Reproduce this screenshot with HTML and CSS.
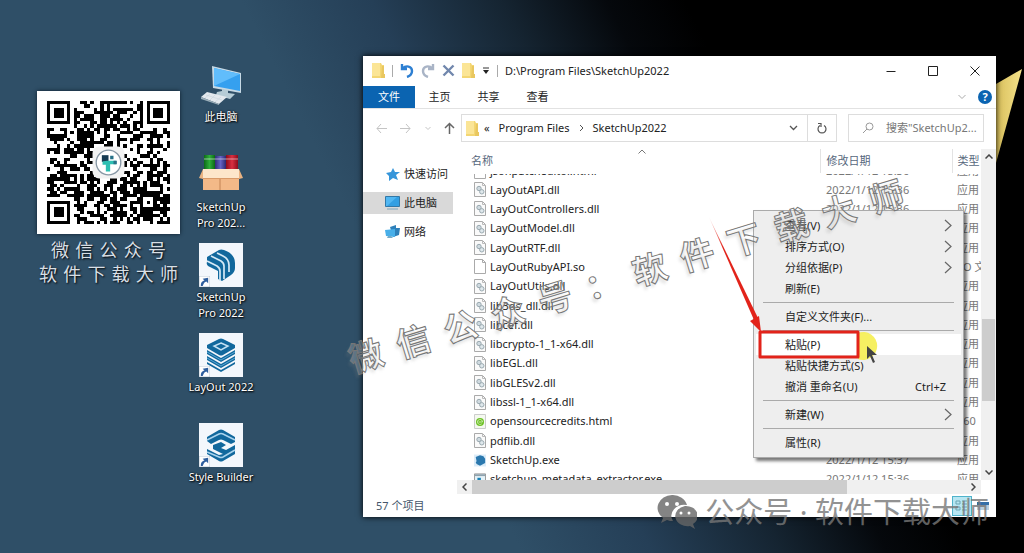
FILE: index.html
```html
<!DOCTYPE html>
<html lang="zh-CN">
<head>
<meta charset="utf-8">
<title>SketchUp2022</title>
<link rel="stylesheet" href="styles.css">
</head>
<body>
<svg class="defs" aria-hidden="true">
  <symbol id="folder" viewBox="0 0 13 15"><path d="M0 0h9l1 2h2v13H0z" fill="#f3d673"/><path d="M0 0h8v13H0z" fill="#fbe596"/><path d="M10 3h2v8h1v4h-4z" fill="#e9c75f"/></symbol>
  <symbol id="dll" viewBox="0 0 12 15"><path d="M.5.5h8l3 3v11H.5z" fill="#fafafa" stroke="#aaa"/><path d="M8.500.5v3h3" fill="none" stroke="#bbb"/><circle cx="5" cy="6.500" r="2.200" fill="#cfdae0" stroke="#9aa9b0"/><circle cx="7.800" cy="9.800" r="2.200" fill="#dfe8ec" stroke="#9aa9b0"/></symbol>
  <symbol id="file" viewBox="0 0 12 15"><path d="M.5.5h8l3 3v11H.5z" fill="#fff" stroke="#aaa"/><path d="M8.500.5v3h3" fill="none" stroke="#aaa"/></symbol>
  <symbol id="html" viewBox="0 0 12 15"><path d="M.5.5h11v14H.5z" fill="#f4f9ef" stroke="#ccc"/><circle cx="6" cy="8" r="4" fill="#6cc024"/><path d="M4.500 8h4a2.500 2.500 0 1 0-.8 1.800" fill="none" stroke="#d9f0c4" stroke-width=".8"/></symbol>
  <symbol id="exe" viewBox="0 0 14 14"><path d="M0 0h14v14H0z" fill="#dcecf8"/><path d="M7 1l4 1 2 3v5l-6 3-4-2-1-2 1-1-1-5z" fill="#2b78ae"/></symbol>
  <symbol id="tool" viewBox="0 0 14 14"><path d="M.5.5h13v13H.5z" fill="#e5f2f8" stroke="#888"/><path d="M1 1h12v2H1z" fill="#8fa2ae"/><path d="M4 5h4v4H4z" fill="#1781b6"/></symbol>
  <symbol id="more" viewBox="0 0 8 13"><path d="M1 1l6 5.500L1 12" fill="none" stroke="#666" stroke-width="1.200"/></symbol>
  <symbol id="shortcut" viewBox="0 0 12 12"><path d="M0 0h12v12H0z" fill="#fff" stroke="#b9c6d4"/><path d="M2 11c0-4 1-5 4-6L4 3l6-1v6L8 6c-3 1-3 3-4 5z" fill="#2f5f9e"/></symbol>
</svg>

<main class="desktop">
  <svg class="wedge" viewBox="0 0 28 94" aria-hidden="true"><defs><linearGradient id="gold" x2="1"><stop stop-color="#d9c05c"/><stop offset="1" stop-color="#f4e18a"/></linearGradient></defs><path d="M0 15L26 0L0 94z" fill="url(#gold)"/></svg>

  <section class="promo">
    <svg class="qr" id="qr" viewBox="0 0 43 43" role="img" aria-label="QR"></svg>
    <p class="spread short"><span>微</span><span>信</span><span>公</span><span>众</span><span>号</span></p>
    <p class="spread"><span>软</span><span>件</span><span>下</span><span>载</span><span>大</span><span>师</span></p>
  </section>

  <nav class="icons">
    <button class="shortcut"><svg viewBox="0 0 44 44"><path d="M13 3l29 7v20l-28-5z" fill="#c6d9e5"/><path d="M15 5l26 6v17l-26-5z" fill="#35a0ef"/><path d="M15 5l26 6-26 12z" fill="#61bdfb"/><path d="M23 26l6 1v3l7 1-5 5-14-4 1-3 5-1z" fill="#b6ccd6"/><path d="M8 29l20 5-8 7L2 34z" fill="#e3e9ee"/><path d="M2 34l18 7v1L2 36z" fill="#9cafba"/><path d="M7 32l16 5M11 31l-5 4M16 32l-5 5M22 34l-6 5" stroke="#c8d4dc" stroke-width=".6"/></svg><span>此电脑</span></button>
    <button class="shortcut"><svg viewBox="0 0 44 44"><defs><linearGradient id="g1" x2="1"><stop stop-color="#0c6b17"/><stop offset=".5" stop-color="#2fae3a"/><stop offset="1" stop-color="#0b6915"/></linearGradient><linearGradient id="g2" x2="1"><stop stop-color="#302b76"/><stop offset=".5" stop-color="#6563c4"/><stop offset="1" stop-color="#2c2770"/></linearGradient><linearGradient id="g3" x2="1"><stop stop-color="#8c0c1b"/><stop offset=".5" stop-color="#d92f40"/><stop offset="1" stop-color="#8c0c1b"/></linearGradient></defs><path d="M5 2h11v18H5z" fill="url(#g1)"/><path d="M16 3h11v17H16z" fill="url(#g2)"/><path d="M27 2h12v18H27z" fill="url(#g3)"/><path d="M5 6h11M16 6h11M27 6h12" stroke="#eee" opacity=".6"/><path d="M4 16h36v21H4z" fill="#f3b988"/><path d="M4 16h36v9H4z" fill="#fde6ca"/><path d="M4 16l-4 9 4 1zM40 16l4 9-4 1z" fill="#eab382"/><path d="M4 25h36v1H4z" fill="#d99a68"/><path d="M21 26v11" stroke="#c48455"/></svg><span>SketchUp<br>Pro 202...</span></button>
    <button class="shortcut"><svg viewBox="0 0 44 44"><path d="M0 0h44v44H0z" fill="#f3f7fc"/><path d="M8 14l12-7q2-1 5 0 11 4 11 13v5q0 4-4 7l-9 6-4-2v-8L9 23q-2-2-1-4z" fill="#11689d"/><path d="M8 18l10 5q3 2 3 5v10M12 13l10 5q3 2 3 5v13M18 10l6 3q6 3 6 9v7" fill="none" stroke="#d5e9f6" stroke-width="1.700"/><use href="#shortcut" x="0" y="33" width="11" height="11"/></svg><span>SketchUp<br>Pro 2022</span></button>
    <button class="shortcut"><svg viewBox="0 0 44 44"><path d="M0 0h44v44H0z" fill="#f3f7fc"/><path d="M20 6q2-1 4 0l12 6v3l-12 7q-2 1-4 0L8 15v-3z" fill="#11689d"/><path d="M22 10l7 3-7 4-7-4z" fill="none" stroke="#c4e1f4" stroke-width="1.500"/><g fill="#11689d"><path d="M8 17l14 8 14-8v4l-14 8-14-8zM8 23l14 8 14-8v4l-14 8-14-8zM8 29l14 8 14-8v2l-14 8-14-8z"/></g><path d="M8 19l14 8 14-8M8 25l14 8 14-8" fill="none" stroke="#58a8d5"/><use href="#shortcut" x="0" y="33" width="11" height="11"/></svg><span>LayOut 2022</span></button>
    <button class="shortcut"><svg viewBox="0 0 44 44"><path d="M0 0h44v44H0z" fill="#f3f7fc"/><path d="M8 14l12-7q2-1 4 0l12 7v5l-4 2-8-4q-2-1-4 0l-8 4-4-3z" fill="#11689d"/><path d="M8 17l12-6q2-1 4 0l12 6" fill="none" stroke="#a9d3ed" stroke-width="1.500"/><path d="M14 22l8-3 5 3-5 3 5 2 9-5v9l-12 7q-2 1-4 0L8 31v-5l12 6 4-1-10-5z" fill="#11689d"/><path d="M8 29l12 5q2 1 4 0l12-7" fill="none" stroke="#a9d3ed" stroke-width="1.500"/><use href="#shortcut" x="0" y="33" width="11" height="11"/></svg><span>Style Builder</span></button>
  </nav>

  <section class="window">
    <header class="titlebar">
      <svg class="folder"><use href="#folder"/></svg><i class="bar"></i>
      <button aria-label="撤消"><svg width="14" height="15" viewBox="0 0 14 15"><path d="M2 1v5h5M2.500 5.500C6 2 12 3 12 8c0 3-2 5-5 6" fill="none" stroke="#2d7fd2" stroke-width="2.400"/></svg></button>
      <button aria-label="恢复"><svg width="14" height="15" viewBox="0 0 14 15"><path d="M12 1v5H7M11.500 5.500C8 2 2 3 2 8c0 3 2 5 5 6" fill="none" stroke="#a9b4c6" stroke-width="2.400"/></svg></button>
      <button aria-label="删除"><svg width="13" height="13" viewBox="0 0 13 13"><path d="M1.500 1.500l10 10M11.500 1.500l-10 10" stroke="#7187ad" stroke-width="2.400"/></svg></button>
      <svg class="folder"><use href="#folder"/></svg>
      <button aria-label="自定义"><svg width="8" height="8" viewBox="0 0 8 8"><path d="M1 1h6" stroke="#333"/><path d="M1 3h6L4 7z" fill="#222"/></svg></button><i class="bar"></i>
      <h1>D:\Program Files\SketchUp2022</h1>
      <div class="controls">
        <button aria-label="最小化"><svg viewBox="0 0 10 10"><path d="M.5 5.500h9"/></svg></button>
        <button aria-label="最大化"><svg viewBox="0 0 10 10"><path d="M.5.5h9v9h-9z"/></svg></button>
        <button aria-label="关闭"><svg viewBox="0 0 10 10"><path d="M.5.5l9 9M9.500.5l-9 9"/></svg></button>
      </div>
    </header>
    <nav class="tabs">
      <button class="active">文件</button><button>主页</button><button>共享</button><button>查看</button>
      <svg class="collapse" width="8" height="6" viewBox="0 0 8 6"><path d="M.5 1L4 4.500 7.500 1" fill="none" stroke="#aaa"/></svg>
      <button class="help" aria-label="帮助">?</button>
    </nav>
    <div class="address">
      <div class="arrows">
        <svg width="11" height="11" viewBox="0 0 11 11"><path d="M11 5.500H1M5 1L1 5.500 5 10" fill="none" stroke="#c4c4c4"/></svg>
        <svg width="11" height="11" viewBox="0 0 11 11"><path d="M0 5.500h10M6 1l4 4.500L6 10" fill="none" stroke="#c4c4c4"/></svg>
        <svg width="6" height="5" viewBox="0 0 6 5"><path d="M.5 1L3 3.500 5.500 1" fill="none" stroke="#c4c4c4"/></svg>
        <svg width="11" height="12" viewBox="0 0 11 12"><path d="M5.500 12V1.500M1 6l4.500-4.500L10 6" fill="none" stroke="#666" stroke-width="1.500"/></svg>
      </div>
      <div class="path">
        <svg class="folder"><use href="#folder"/></svg>
        <span class="lead">«</span><a href="#">Program Files</a><svg width="5" height="8" viewBox="0 0 5 8"><path d="M1 1l3 3-3 3" fill="none" stroke="#555"/></svg><a href="#">SketchUp2022</a>
        <svg class="drop" width="9" height="6" viewBox="0 0 9 6"><path d="M1 1l3.500 3.500L8 1" fill="none" stroke="#555" stroke-width="1.300"/></svg>
        <button class="reload" aria-label="刷新"><svg width="10" height="12" viewBox="0 0 10 12"><path d="M7 3.500A4 4 0 1 1 3 3.500M1 1.500h3v3.500" fill="none" stroke="#555" stroke-width="1.200"/></svg></button>
      </div>
      <label class="search"><svg width="12" height="12" viewBox="0 0 12 12"><circle cx="7.500" cy="4.500" r="3.500" fill="none" stroke="#999"/><path d="M5 7L1 11" stroke="#999"/></svg><input aria-label="搜索" placeholder="搜索&quot;SketchUp2..."></label>
    </div>
    <div class="body">
      <nav class="side">
        <a href="#"><svg viewBox="0 0 15 14"><path d="M8 1l2 4 5 0-4 3 2 5-5-2-4 3 0-5-3-3 5-1z" fill="#3595da"/></svg>快速访问</a>
        <a href="#" class="on"><svg viewBox="0 0 15 14"><path d="M.5.5h14v10H.5z" fill="#51b7f2" stroke="#3278a7"/><path d="M2 10l10-9h2v9z" fill="#329fe3"/><path d="M2 13h11" stroke="#7da6bd"/></svg>此电脑</a>
        <a href="#"><svg viewBox="0 0 15 14"><path d="M5 2l6-2v3l4 0-1 7-6 2z" fill="#2e80ba"/><path d="M0 5l10-1v8l-9-1z" fill="#48afe9"/><path d="M3 11l3 0 2 2H2z" fill="#75aac8"/></svg>网络</a>
      </nav>
      <div class="listing">
        <div class="viewport">
          <table>
            <thead><tr><th>名称<svg class="sort" width="8" height="5" viewBox="0 0 8 5"><path d="M.5 4.500L4 1l3.500 3.500" fill="none" stroke="#777"/></svg></th><th>修改日期</th><th>类型</th></tr></thead>
            <tbody id="rows"></tbody>
          </table>
        </div>
        <div class="vscroll"><svg viewBox="0 0 8 5"><path d="M.5 4.500L4 1l3.500 3.500"/></svg><i></i><svg viewBox="0 0 8 5"><path d="M.5.5L4 4 7.500.5"/></svg></div>
        <div class="hscroll"><svg viewBox="0 0 5 8"><path d="M4.500.5L1 4l3.500 3.500"/></svg><i></i><svg viewBox="0 0 5 8"><path d="M.5.5L4 4 .5 7.500"/></svg></div>
      </div>
    </div>
    <footer class="status"><span>57 个项目</span><div class="views"><button class="on" aria-label="详细信息"><svg width="14" height="12" viewBox="0 0 14 12"><path d="M1 1h4v3H1zM1 7h4v3H1zM7 1h5M7 4h5M7 7h5M7 10h5" fill="none" stroke="#6aa5b3"/></svg></button><button aria-label="大图标"><svg width="14" height="10" viewBox="0 0 14 10"><path d="M1 1h12v8H1z" fill="#b9cfe0"/><path d="M1 1h12v3H1z" fill="#346fa8"/></svg></button></div></footer>
  </section>

  <div class="menu" role="menu">
    <button>查看(V)<svg><use href="#more"/></svg></button>
    <button>排序方式(O)<svg><use href="#more"/></svg></button>
    <button>分组依据(P)<svg><use href="#more"/></svg></button>
    <button>刷新(E)</button>
    <hr>
    <button>自定义文件夹(F)...</button>
    <hr>
    <button class="hot">粘贴(P)</button>
    <button>粘贴快捷方式(S)</button>
    <button>撤消 重命名(U)<kbd>Ctrl+Z</kbd></button>
    <hr>
    <button>新建(W)<svg><use href="#more"/></svg></button>
    <hr>
    <button>属性(R)</button>
  </div>

  <svg class="pointer" viewBox="0 0 180 150" aria-hidden="true">
    <defs><linearGradient id="fade" x2="0" y2="1"><stop stop-color="#e2231a" stop-opacity=".1"/><stop offset=".3" stop-color="#e2231a"/></linearGradient></defs>
    <path d="M151 118a14 14 0 1 1 0 26z" fill="#f5ee51" opacity=".9"/>
    <path d="M2 2L51 103l-4 2z" fill="url(#fade)"/><path d="M43 106l9-5 2 16z" fill="#e2231a"/>
    <path d="M53 117h98v25H53z" fill="none" stroke="#e2231a" stroke-width="3" stroke-linejoin="round"/>
    <path d="M160 131v13l3-3 3 7 2-1-3-7 5 0z" fill="#444"/>
  </svg>
  <p class="diagonal"><span>微</span><span>信</span><span>公</span><span>众</span><span>号</span><span>：</span><span>软</span><span>件</span><span>下</span><span>载</span><span>大</span><span>师</span></p>
  <p class="account"><svg width="40" height="34" viewBox="0 0 40 34"><path d="M15 0a15 13 0 0 0-9 23l-2 5 6-3c2 1 4 1 6 1A13 11 0 0 1 30 10 15 13 0 0 0 15 0z"/><path d="M28 11a12 10 0 1 0 5 20l5 3-2-5a12 10 0 0 0-8-18z"/><g fill="#fff"><circle cx="10" cy="9" r="2"/><circle cx="20" cy="9" r="2"/><circle cx="24" cy="18" r="1.500"/><circle cx="32" cy="18" r="1.500"/></g></svg>公众号 · 软件下载大师</p>
</main>
<script src="app.js"></script>
</body>
</html>
```
FILE: styles.css
```css
* { box-sizing: border-box; }
body { margin: 0; font: 11px/16px "Noto Sans", "Noto Sans CJK SC", sans-serif; color: #222; }
button { font: inherit; color: inherit; background: none; border: 0; padding: 0; text-align: left; }
a { color: inherit; text-decoration: none; }
p { margin: 0; }
svg { flex: none; }
.defs { position: absolute; width: 0; height: 0; }
.desktop { position: relative; min-height: 100vh; overflow: hidden; background: linear-gradient(63deg, #2f4f67 0, #2f4f67 40%, #253f57 50%, #152431 60%, #05080c 68%, #000 74%); }
.wedge { position: absolute; right: 0; top: 69px; width: 28px; height: 94px; }

.promo { position: absolute; left: 37px; top: 91px; width: 143px; }
.qr { display: block; width: 100%; background: #fff; box-shadow: 0 0 4px #0d1d2a; }
.spread { display: flex; justify-content: space-between; font-size: 18px; line-height: 24px; color: #d8dfe5; text-shadow: 1px 1px 2px #000; padding: 0 2px; }
.spread.short { padding: 0 14px; margin-top: 4px; }

.icons { position: absolute; left: 176px; top: 63px; width: 90px; display: grid; grid-auto-rows: 90px; }
.shortcut { display: flex; flex-direction: column; align-items: center; gap: 2px; color: #fff; text-align: center; text-shadow: 1px 1px 2px #000, 0 0 2px #000; }
.shortcut svg { width: 44px; height: 44px; }

.window { position: absolute; left: 363px; right: 28px; top: 56px; bottom: 36px; background: #fff; display: flex; flex-direction: column; box-shadow: 0 0 6px #000; }
.titlebar { display: flex; align-items: center; gap: 7px; height: 29px; padding-left: 9px; }
.titlebar button { display: flex; }
.titlebar h1 { font: inherit; margin: 0; }
.folder { width: 13px; height: 15px; }
.bar { width: 1px; height: 12px; background: #aaa; }
.controls { display: flex; margin-left: auto; }
.controls button { width: 42px; justify-content: center; }
.controls svg { width: 10px; height: 10px; fill: none; stroke: #222; }
.tabs { display: flex; align-items: center; height: 24px; border-bottom: 1px solid #e2e2e2; }
.tabs button { width: 49px; line-height: 22px; text-align: center; }
.tabs .active { width: 52px; background: #0b64b1; color: #fff; }
.tabs .collapse { margin-left: auto; }
.tabs .help { width: 14px; height: 14px; line-height: 14px; border-radius: 50%; background: #0b64b1; color: #fff; font-weight: 700; margin: 0 4px 0 12px; }
.address { display: flex; padding: 5px 12px 7px 13px; height: 40px; }
.arrows { display: flex; align-items: center; justify-content: space-between; width: 79px; margin-right: 6px; }
.path { display: flex; align-items: center; flex: 1; border: 1px solid #ddd; padding-left: 4px; }
.path a { margin: 0 9px; }
.lead { margin-left: 5px; }
.drop { margin: 0 9px 0 auto; }
.reload { display: flex; align-items: center; justify-content: center; align-self: stretch; width: 29px; border-left: 1px solid #ddd; }
.search { display: flex; align-items: center; gap: 12px; width: 136px; margin-left: 11px; border: 1px solid #ddd; padding-left: 13px; }
.search input { font: inherit; border: 0; padding: 0; min-width: 0; flex: 1; }
.search input::placeholder { color: #777; opacity: 1; }

.body { flex: 1; min-height: 0; display: flex; gap: 4px; }
.side { width: 90px; padding-top: 14px; display: flex; flex-direction: column; gap: 7px; }
.side a { display: flex; align-items: center; gap: 4px; height: 22px; padding-left: 22px; white-space: nowrap; }
.side .on { background: #d9d9d9; }
.side svg { width: 15px; height: 14px; }
.listing { flex: 1; min-width: 0; display: grid; grid-template-columns: 1fr 15px; grid-template-rows: minmax(0, 1fr) 14px; }
.viewport { overflow: hidden; }
table { width: 100%; height: 340px; border-collapse: collapse; table-layout: fixed; }
th { height: 24px; padding: 0 0 0 14px; text-align: left; font-weight: 400; color: #56677c; border-right: 1px solid #e3e3e3; position: relative; }
th:last-child { border-right: 0; }
th:nth-child(2) { width: 132px; padding-left: 6px; }
th:nth-child(3) { width: 29px; padding-left: 5px; }
.sort { position: absolute; left: 50%; top: 0; }
td { padding: 0 0 0 6px; white-space: nowrap; overflow: hidden; color: #777; line-height: 16px; }
td:first-child { padding-left: 17px; color: #222; }
td:last-child { padding-left: 5px; }
.name { display: flex; align-items: center; gap: 4px; }
.name svg { width: 12px; height: 15px; }
.cut td { height: 7px; }
.cut td > * { height: 5px; overflow: hidden; display: flex; align-items: flex-end; }
.vscroll { background: #f0f0f0; display: flex; flex-direction: column; align-items: center; justify-content: space-between; padding: 5px 0; }
.vscroll svg { width: 8px; height: 5px; }
.vscroll i { width: 13px; height: 82px; background: #cdcdcd; margin-top: 90px; }
.hscroll { background: #f0f0f0; display: flex; align-items: center; justify-content: space-between; padding: 0 5px; }
.hscroll svg { width: 5px; height: 8px; }
.hscroll i { width: 73%; height: 14px; background: #cdcdcd; margin: 0 auto 0 5px; }
.vscroll path, .hscroll path { fill: none; stroke: #444; stroke-width: 1.5; }
.status { display: flex; align-items: center; height: 23px; padding: 0 6px 0 13px; color: #45566b; }
.views { margin-left: auto; display: flex; align-items: center; gap: 4px; }
.views button { display: flex; }
.views .on { background: #b7e6f2; border: 1px solid #4fb3cb; padding: 3px 2px; }

.menu { position: absolute; left: 753px; top: 210px; width: 211px; padding: 4px 2px; background: #eee; border: 1px solid #aaa; box-shadow: 3px 3px 3px #0008; }
.menu button { display: flex; align-items: center; justify-content: space-between; width: 100%; height: 21px; padding: 0 9px 0 29px; }
.menu svg { width: 8px; height: 13px; }
.menu .hot { background: #fff; }
.menu kbd { font: inherit; padding-right: 6px; }
.menu hr { height: 1px; margin: 3px 7px; border: 0; background: #aaa; }

.pointer { position: absolute; left: 707px; top: 215px; width: 180px; height: 150px; }
.diagonal { position: absolute; left: 337px; top: 252px; width: 578px; display: flex; justify-content: space-between; font-size: 34px; line-height: 48px; font-weight: 700; color: #fff3; -webkit-text-stroke: 1px #777; text-shadow: -3px 3px 3px #8883; transform: rotate(-17deg); pointer-events: none; }
.account { position: absolute; right: 35px; bottom: 21px; display: flex; align-items: center; gap: 8px; font-size: 29px; line-height: 40px; color: #777; opacity: .8; white-space: nowrap; pointer-events: none; }
.account > svg { fill: #666; }
```
FILE: app.js
```js
const files = [
  ["jsonpatcheditor.html", "file"], ["LayOutAPI.dll", "dll"], ["LayOutControllers.dll", "dll"],
  ["LayOutModel.dll", "dll"], ["LayOutRTF.dll", "dll"], ["LayOutRubyAPI.so", "file", "SO 文件"],
  ["LayOutUtils.dll", "dll"], ["lib3ds_dll.dll", "dll"], ["libcef.dll", "dll"],
  ["libcrypto-1_1-x64.dll", "dll"], ["libEGL.dll", "dll"], ["libGLESv2.dll", "dll"],
  ["libssl-1_1-x64.dll", "dll"], ["opensourcecredits.html", "html", "360"], ["pdflib.dll", "dll"],
  ["SketchUp.exe", "exe", "应用", "2022/1/12 15:37"], ["sketchup_metadata_extractor.exe", "tool"]
];
document.getElementById("rows").innerHTML = files.map(([name, icon, type = "应用", date = "2022/1/12 15:36"], i) =>
  `<tr${i ? "" : ' class="cut"'}><td><div class="name"><svg><use href="#${icon}"/></svg>${name}</div></td><td><div>${date}</div></td><td><div>${type}</div></td></tr>`
).join("");

const size = 37;
let seed = 20221;
const random = () => (seed = (seed * 1103515245 + 12345) % 2147483648) / 2147483648;
let d = "";
const finder = (x, y) => {
  const r = Math.max(Math.abs(x - 3), Math.abs(y - 3));
  return r === 3 || r < 2;
};
for (let y = 0; y < size; y++) for (let x = 0; x < size; x++) {
  const left = x < 8, right = x > 28, top = y < 8, bottom = y > 28;
  let on = random() < 0.54;
  if (left && top) on = x < 7 && y < 7 && finder(x, y);
  else if (right && top) on = x > 29 && y < 7 && finder(x - 30, y);
  else if (left && bottom) on = x < 7 && y > 29 && finder(x, y - 30);
  else if (x > 27 && x < 33 && y > 27 && y < 33) on = Math.max(Math.abs(x - 30), Math.abs(y - 30)) !== 1;
  if (x > 13 && x < 23 && y > 13 && y < 23) on = false;
  if (on) d += `M${x + 3} ${y + 3}h1v1h-1z`;
}
document.getElementById("qr").innerHTML = `<path d="${d}" shape-rendering="crispEdges"/>
<rect x="16.700" y="16.700" width="9.600" height="9.600" rx="2" fill="#f2f2f2"/><circle cx="21.500" cy="21.500" r="3.700" fill="#fff" stroke="#8797a5" stroke-width=".4"/>
<path d="M19.500 19.300h2v2h-2z" fill="#163a52"/><path d="M21 21h2.800v1H22v2.200h-1.300v-2h-1v-1z" fill="#2dbfb2"/><path d="M22 19.500h1v1h-1zM23 21h1v1h-1z" fill="#267188"/>`;
```
